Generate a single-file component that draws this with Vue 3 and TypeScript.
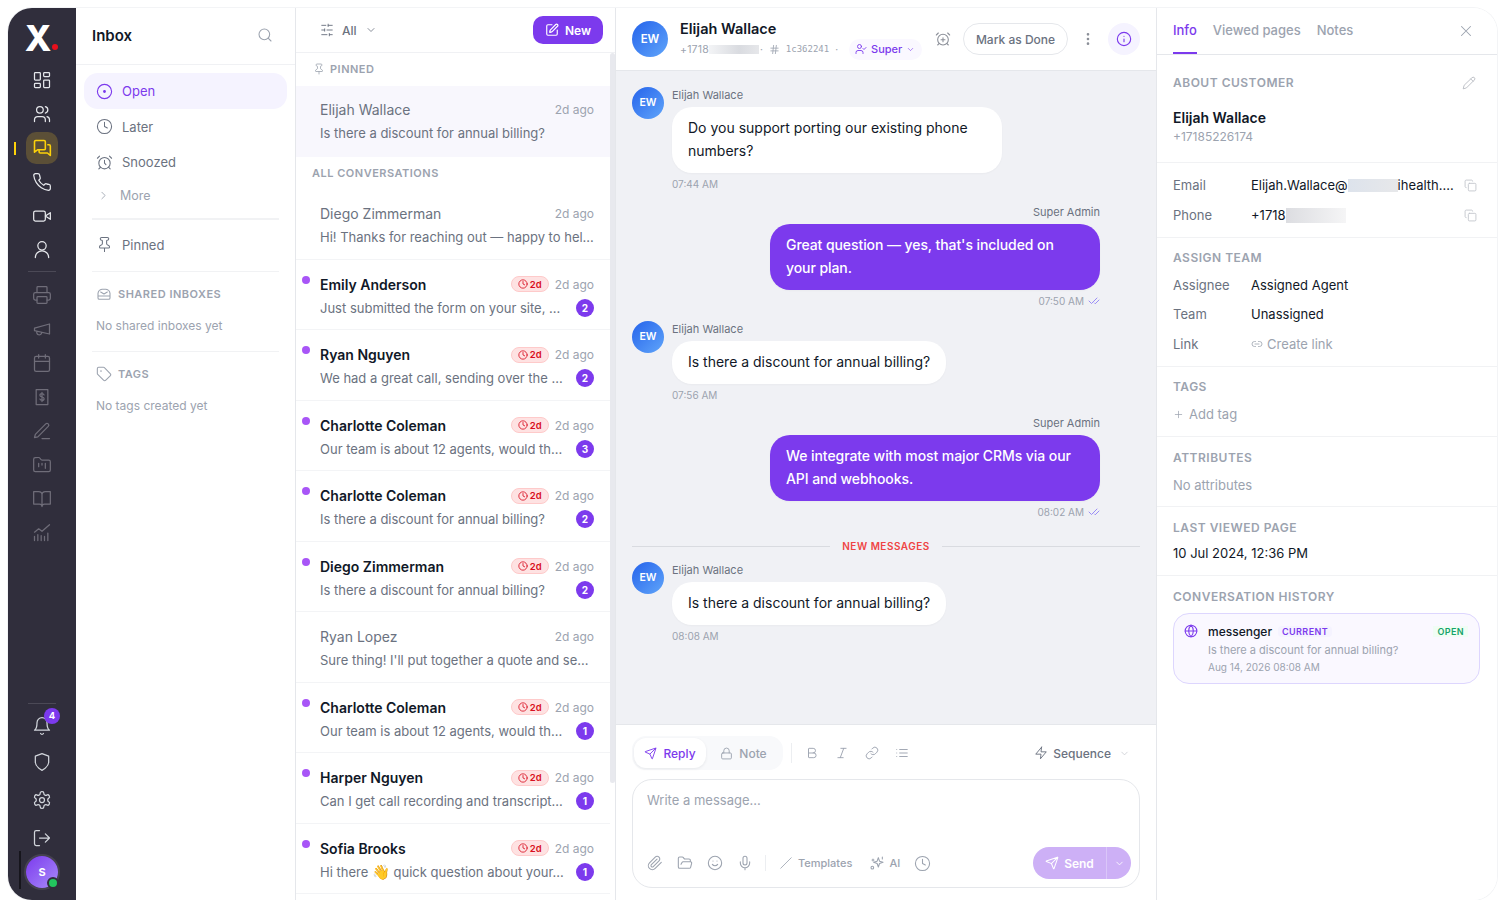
<script setup lang="ts">
import { h } from 'vue';
import type { FunctionalComponent } from 'vue';

const p = (d: string) => `<path d="${d}"/>`;
const c = (x: number, y: number, r: number) => `<circle cx="${x}" cy="${y}" r="${r}"/>`;
const icons: Record<string, string> = {
  dashboard: '<rect x="3" y="3" width="7" height="9" rx="1"/><rect x="14" y="3" width="7" height="5" rx="1"/><rect x="14" y="12" width="7" height="9" rx="1"/><rect x="3" y="16" width="7" height="5" rx="1"/>',
  users: p('M16 21v-2a4 4 0 0 0-4-4H7a4 4 0 0 0-4 4v2M21 21v-2a4 4 0 0 0-3-3.87M16 3.13a4 4 0 0 1 0 7.75') + c(9.5, 7, 4),
  chats: p('M3 4.5A1.5 1.5 0 0 1 4.5 3h10A1.5 1.5 0 0 1 16 4.5V13a1 1 0 0 1-1 1H7l-4 3zM19 8h1.5A1.5 1.5 0 0 1 22 9.5V21l-3.5-3H10a1.5 1.5 0 0 1-1.5-1.5V14'),
  phone: p('M22 16.92v3a2 2 0 0 1-2.18 2 19.79 19.79 0 0 1-8.63-3.07 19.5 19.5 0 0 1-6-6 19.79 19.79 0 0 1-3.07-8.67A2 2 0 0 1 4.11 2h3a2 2 0 0 1 2 1.72 12.84 12.84 0 0 0 .7 2.81 2 2 0 0 1-.45 2.11L8.09 9.91a16 16 0 0 0 6 6l1.27-1.27a2 2 0 0 1 2.11-.45 12.84 12.84 0 0 0 2.81.7A2 2 0 0 1 22 16.92z'),
  video: p('m22 8-6 4 6 4V8Z') + '<rect x="2" y="6" width="14" height="12" rx="2"/>',
  user: p('M4 21c0-4.4 3.6-8 8-8s8 3.6 8 8') + c(12, 7, 5),
  printer: p('M6 9V3a1 1 0 0 1 1-1h10a1 1 0 0 1 1 1v6M6 18H4a2 2 0 0 1-2-2v-5a2 2 0 0 1 2-2h16a2 2 0 0 1 2 2v5a2 2 0 0 1-2 2h-2') + '<rect x="6" y="14" width="12" height="8" rx="1"/>',
  megaphone: p('m3 11 18-5v12L3 14v-3zM11.6 16.8a3 3 0 1 1-5.8-1.6'),
  calendar: '<rect x="3" y="4" width="18" height="18" rx="2"/>' + p('M16 2v4M8 2v4M3 10h18'),
  receipt: p('M5 3h14v18H5zM14.5 9.5c-.5-1-1.5-1.5-2.5-1.5-1.4 0-2.5.7-2.5 2s1.1 1.8 2.5 2 2.5.7 2.5 2-1.1 2-2.5 2c-1 0-2-.5-2.5-1.5M12 6.5v11'),
  penline: p('M12 21h9M16.5 3.5a2.12 2.12 0 0 1 3 3L7 19l-4 1 1-4Z'),
  folderk: p('M4 20h16a2 2 0 0 0 2-2V8a2 2 0 0 0-2-2h-7.93a2 2 0 0 1-1.66-.9l-.82-1.2A2 2 0 0 0 7.93 3H4a2 2 0 0 0-2 2v13c0 1.1.9 2 2 2ZM8 10v4M12 10v2M16 10v6'),
  book: p('M2 3h6a4 4 0 0 1 4 4v14a3 3 0 0 0-3-3H2zM22 3h-6a4 4 0 0 0-4 4v14a3 3 0 0 1 3-3h7z'),
  chart: p('M3 21v-5M7 21v-7M11 21v-6M15 21v-5M19 21v-9M3 11l5-4 4 3 9-8'),
  bell: p('M6 8a6 6 0 0 1 12 0c0 7 3 9 3 9H3s3-2 3-9M10.3 21a1.94 1.94 0 0 0 3.4 0'),
  shield: p('M12 22s8-4 8-10V5l-8-3-8 3v7c0 6 8 10 8 10z'),
  gear: p('M12.22 2h-.44a2 2 0 0 0-2 2v.18a2 2 0 0 1-1 1.73l-.43.25a2 2 0 0 1-2 0l-.15-.08a2 2 0 0 0-2.73.73l-.22.38a2 2 0 0 0 .73 2.73l.15.1a2 2 0 0 1 1 1.72v.51a2 2 0 0 1-1 1.74l-.15.09a2 2 0 0 0-.73 2.73l.22.38a2 2 0 0 0 2.73.73l.15-.08a2 2 0 0 1 2 0l.43.25a2 2 0 0 1 1 1.73V20a2 2 0 0 0 2 2h.44a2 2 0 0 0 2-2v-.18a2 2 0 0 1 1-1.73l.43-.25a2 2 0 0 1 2 0l.15.08a2 2 0 0 0 2.73-.73l.22-.39a2 2 0 0 0-.73-2.73l-.15-.08a2 2 0 0 1-1-1.74v-.5a2 2 0 0 1 1-1.74l.15-.09a2 2 0 0 0 .73-2.73l-.22-.38a2 2 0 0 0-2.73-.73l-.15.08a2 2 0 0 1-2 0l-.43-.25a2 2 0 0 1-1-1.73V4a2 2 0 0 0-2-2z') + c(12, 12, 3),
  logout: p('M9 21H5a2 2 0 0 1-2-2V5a2 2 0 0 1 2-2h4M16 17l5-5-5-5M21 12H9'),
  search: c(11, 11, 8) + p('m21 21-4.3-4.3'),
  open: c(12, 12, 10) + '<circle cx="12" cy="12" r="1.2" fill="currentColor"/>',
  clock: c(12, 12, 10) + p('M12 6v6l4 2'),
  alarm: c(12, 13, 8) + p('M12 9v4l2 2M5 3 2 6M22 6l-3-3M6.38 18.7 4 21M17.64 18.67 20 21'),
  alarmplus: c(12, 13, 8) + p('M12 10v6M9 13h6M5 3 2 6M22 6l-3-3M6.38 18.7 4 21M17.64 18.67 20 21'),
  right: p('m9 18 6-6-6-6'),
  down: p('m6 9 6 6 6-6'),
  pin: p('M12 17v5M9 10.76a2 2 0 0 1-1.11 1.79l-1.78.9A2 2 0 0 0 5 15.24V16a1 1 0 0 0 1 1h12a1 1 0 0 0 1-1v-.76a2 2 0 0 0-1.11-1.79l-1.78-.9A2 2 0 0 1 15 10.76V7a1 1 0 0 1 1-1 2 2 0 0 0 0-4H8a2 2 0 0 0 0 4 1 1 0 0 1 1 1z'),
  inbox: p('M3 11a7 7 0 0 1 6-6h6a7 7 0 0 1 6 6v7a2 2 0 0 1-2 2H5a2 2 0 0 1-2-2zM3 15h18M7 9l5 3 5-3'),
  tag: p('M12.586 2.586A2 2 0 0 0 11.172 2H4a2 2 0 0 0-2 2v7.172a2 2 0 0 0 .586 1.414l8.704 8.704a2.426 2.426 0 0 0 3.42 0l6.58-6.58a2.426 2.426 0 0 0 0-3.42z') + c(7.5, 7.5, 0.5),
  sliders: p('M21 4h-7M10 4H3M21 12h-9M8 12H3M21 20h-5M12 20H3M14 2v4M8 10v4M16 18v4'),
  compose: p('M12 3H5a2 2 0 0 0-2 2v14a2 2 0 0 0 2 2h14a2 2 0 0 0 2-2v-7M18.375 2.625a1 1 0 0 1 3 3l-9.013 9.014a2 2 0 0 1-.853.505l-2.873.84a.5.5 0 0 1-.62-.62l.84-2.873a2 2 0 0 1 .506-.852z'),
  hash: p('M4 9h16M4 15h16M10 3 8 21M16 3l-2 18'),
  usercheck: p('M16 21v-2a4 4 0 0 0-4-4H6a4 4 0 0 0-4 4v2M16 11l2 2 4-4') + c(9, 7, 4),
  more: '<circle cx="12" cy="5" r="1"/><circle cx="12" cy="12" r="1"/><circle cx="12" cy="19" r="1"/>',
  info: c(12, 12, 10) + p('M12 16v-4M12 8h.01'),
  x: p('M18 6 6 18M6 6l12 12'),
  send: p('M14.536 21.686a.5.5 0 0 0 .937-.024l6.5-19a.496.496 0 0 0-.635-.635l-19 6.5a.5.5 0 0 0-.024.937l7.93 3.18a2 2 0 0 1 1.112 1.11zM21.854 2.147l-10.94 10.939'),
  lock: '<rect x="3" y="11" width="18" height="11" rx="2"/>' + p('M7 11V7a5 5 0 0 1 10 0v4'),
  bold: p('M6 12h9a4 4 0 0 1 0 8H7a1 1 0 0 1-1-1V5a1 1 0 0 1 1-1h7a4 4 0 0 1 0 8'),
  italic: p('M19 4h-9M14 20H5M15 4 9 20'),
  link: p('M10 13a5 5 0 0 0 7.54.54l3-3a5 5 0 0 0-7.07-7.07l-1.72 1.71M14 11a5 5 0 0 0-7.54-.54l-3 3a5 5 0 0 0 7.07 7.07l1.71-1.71'),
  list: p('M3 6h.01M8 6h13M3 12h.01M8 12h13M3 18h.01M8 18h13'),
  zap: p('M13 2 3 14h9l-1 8 10-12h-9l1-8z'),
  clip: p('m21.44 11.05-9.19 9.19a6 6 0 0 1-8.49-8.49l8.57-8.57A4 4 0 1 1 18 8.84l-8.59 8.57a2 2 0 0 1-2.83-2.83l8.49-8.48'),
  folder: p('m6 14 1.5-2.9A2 2 0 0 1 9.24 10H20a2 2 0 0 1 1.94 2.5l-1.54 6a2 2 0 0 1-1.95 1.5H4a2 2 0 0 1-2-2V5a2 2 0 0 1 2-2h3.9a2 2 0 0 1 1.69.9l.81 1.2a2 2 0 0 0 1.67.9H18a2 2 0 0 1 2 2v2'),
  smile: c(12, 12, 10) + p('M8 14s1.5 2 4 2 4-2 4-2M9 9h.01M15 9h.01'),
  mic: p('M12 2a3 3 0 0 0-3 3v7a3 3 0 0 0 6 0V5a3 3 0 0 0-3-3ZM19 10v2a7 7 0 0 1-14 0v-2M12 19v3'),
  slash: p('M3 21 21 3'),
  sparkles: p('M14 4l1.8 5.2L21 11l-5.2 1.8L14 18l-1.8-5.2L7 11l5.2-1.8zM20 3v3M6 6v3M4.5 7.5h3') + c(5, 19, 2),
  pencil: p('M17 3a2.85 2.83 0 1 1 4 4L7.5 20.5 2 22l1.5-5.5ZM15 5l4 4'),
  copy: '<rect x="8" y="8" width="14" height="14" rx="2"/>' + p('M4 16c-1.1 0-2-.9-2-2V4c0-1.1.9-2 2-2h10c1.1 0 2 .9 2 2'),
  link2: p('M9 17H7A5 5 0 0 1 7 7h2M15 7h2a5 5 0 1 1 0 10h-2M8 12h8'),
  plus: p('M5 12h14M12 5v14'),
  globe: c(12, 12, 10) + p('M12 2a14.5 14.5 0 0 0 0 20 14.5 14.5 0 0 0 0-20M2 12h20'),
  checks: p('M18 6 7 17l-5-5M22 10l-7.5 7.5L13 16'),
};

const Ico: FunctionalComponent<{ name: string; size?: number; sw?: number }> = (props) =>
  h('svg', {
    viewBox: '0 0 24 24',
    width: props.size ?? 16,
    height: props.size ?? 16,
    fill: 'none',
    stroke: 'currentColor',
    'stroke-width': props.sw ?? 2,
    'stroke-linecap': 'round',
    'stroke-linejoin': 'round',
    innerHTML: icons[props.name],
  });
Ico.props = ['name', 'size', 'sw'];

const railTop = ['dashboard', 'users', 'chats', 'phone', 'video', 'user'];
const railFaded = ['printer', 'megaphone', 'calendar', 'receipt', 'penline', 'folderk', 'book', 'chart'];

const conversations = [
  { name: 'Diego Zimmerman', text: 'Hi! Thanks for reaching out — happy to hel...', unread: 0 },
  { name: 'Emily Anderson', text: 'Just submitted the form on your site, ...', unread: 2 },
  { name: 'Ryan Nguyen', text: 'We had a great call, sending over the ...', unread: 2 },
  { name: 'Charlotte Coleman', text: 'Our team is about 12 agents, would th...', unread: 3 },
  { name: 'Charlotte Coleman', text: 'Is there a discount for annual billing?', unread: 2 },
  { name: 'Diego Zimmerman', text: 'Is there a discount for annual billing?', unread: 2 },
  { name: 'Ryan Lopez', text: "Sure thing! I'll put together a quote and se...", unread: 0 },
  { name: 'Charlotte Coleman', text: 'Our team is about 12 agents, would th...', unread: 1 },
  { name: 'Harper Nguyen', text: 'Can I get call recording and transcript...', unread: 1 },
  { name: 'Sofia Brooks', lead: 'Hi there ', text: ' quick question about your...', unread: 1 },
];

const messages = [
  { mine: false, text: 'Do you support porting our existing phone numbers?', time: '07:44 AM', wide: true },
  { mine: true, text: "Great question — yes, that's included on your plan.", time: '07:50 AM', wide: true },
  { mine: false, text: 'Is there a discount for annual billing?', time: '07:56 AM', wide: false },
  { mine: true, text: 'We integrate with most major CRMs via our API and webhooks.', time: '08:02 AM', wide: true },
];
</script>

<template>
  <div class="frame">
    <nav class="rail">
      <div class="logo">X<i></i></div>
      <div class="rail-group">
        <a v-for="n in railTop" :key="n" class="rail-btn" :class="{ active: n === 'chats' }">
          <Ico :name="n" :size="20" :sw="n === 'chats' ? 1.9 : 1.5" />
        </a>
      </div>
      <div class="rail-line"></div>
      <div class="rail-group faded">
        <a v-for="n in railFaded" :key="n" class="rail-btn"><Ico :name="n" :size="20" :sw="1.5" /></a>
      </div>
      <div class="rail-bottom">
        <div class="rail-line2"></div>
        <a class="rail-b bell"><Ico name="bell" :size="20" :sw="1.5" /><b class="bell-badge">4</b></a>
        <a class="rail-b"><Ico name="shield" :size="20" :sw="1.5" /></a>
        <a class="rail-b"><Ico name="gear" :size="20" :sw="1.5" /></a>
        <a class="rail-b"><Ico name="logout" :size="20" :sw="1.5" /></a>
        <div class="me">S<i></i></div>
      </div>
    </nav>

    <aside class="inbox">
      <header class="inbox-head">
        <h1>Inbox</h1>
        <Ico name="search" :size="16" :sw="1.6" class="muted" />
      </header>
      <div class="inbox-nav">
        <div class="nav-item on"><Ico name="open" :size="17" :sw="1.6" />Open</div>
        <div class="nav-item"><Ico name="clock" :size="17" :sw="1.5" />Later</div>
        <div class="nav-item"><Ico name="alarm" :size="17" :sw="1.5" />Snoozed</div>
        <div class="nav-more"><Ico name="right" :size="13" :sw="1.6" />More</div>
        <div class="hr thick"></div>
        <div class="nav-item pinned"><Ico name="pin" :size="17" :sw="1.5" />Pinned</div>
        <div class="hr"></div>
        <div class="side-title"><Ico name="inbox" :size="16" :sw="1.6" />SHARED INBOXES</div>
        <div class="side-empty">No shared inboxes yet</div>
        <div class="hr"></div>
        <div class="side-title"><Ico name="tag" :size="16" :sw="1.6" />TAGS</div>
        <div class="side-empty">No tags created yet</div>
      </div>
    </aside>

    <section class="list">
      <header class="list-head">
        <div class="filter"><Ico name="sliders" :size="14" :sw="1.6" /><span>All</span><Ico name="down" :size="12" :sw="1.6" /></div>
        <button class="new"><Ico name="compose" :size="14" :sw="2" />New</button>
      </header>
      <div class="list-body">
        <div class="sec-pin"><Ico name="pin" :size="12" :sw="1.6" />PINNED</div>
        <div class="pin-row">
          <div class="line1"><span class="who read">Elijah Wallace</span><span class="ago">2d ago</span></div>
          <div class="line2"><span class="snip">Is there a discount for annual billing?</span></div>
        </div>
        <div class="sec-all">ALL CONVERSATIONS</div>
        <div v-for="(row, i) in conversations" :key="i" class="row">
          <i v-if="row.unread" class="dot"></i>
          <div class="line1">
            <span class="who" :class="{ read: !row.unread }">{{ row.name }}</span>
            <span v-if="row.unread" class="sla"><Ico name="clock" :size="10" :sw="2" />2d</span>
            <span class="ago">2d ago</span>
          </div>
          <div class="line2">
            <span class="snip"><template v-if="row.lead">{{ row.lead }}<span class="wave">👋</span></template>{{ row.text }}</span>
            <b v-if="row.unread" class="count">{{ row.unread }}</b>
          </div>
        </div>
        <div class="thumb"></div>
      </div>
    </section>

    <main class="chat">
      <header class="chat-head">
        <div class="av big">EW</div>
        <div class="who-box">
          <div class="chat-name">Elijah Wallace</div>
          <div class="chat-sub">
            <span class="num">+1718</span><span class="blur b1"></span><span class="sep s1">·</span>
            <Ico name="hash" :size="11" :sw="1.8" />
            <span class="mono">1c362241</span><span class="sep">·</span>
            <span class="super"><Ico name="usercheck" :size="12" :sw="1.8" />Super<Ico name="down" :size="9" :sw="1.6" /></span>
          </div>
        </div>
        <div class="head-actions">
          <Ico name="alarmplus" :size="16" :sw="1.6" class="muted2" />
          <button class="done">Mark as Done</button>
          <Ico name="more" :size="16" :sw="2" class="muted2" />
          <span class="info-btn"><Ico name="info" :size="16" :sw="1.7" /></span>
        </div>
      </header>

      <div class="thread">
        <template v-for="(m, i) in messages" :key="i">
          <div v-if="!m.mine" class="msg">
            <div class="av">EW</div>
            <div class="msg-col">
              <div class="msg-name">Elijah Wallace</div>
              <div class="bubble" :class="{ wide: m.wide }">{{ m.text }}</div>
              <div class="msg-time">{{ m.time }}</div>
            </div>
          </div>
          <div v-else class="msg mine">
            <div class="msg-name">Super Admin</div>
            <div class="bubble wide">{{ m.text }}</div>
            <div class="msg-time">{{ m.time }}<Ico name="checks" :size="12" :sw="1.7" class="tick" /></div>
          </div>
        </template>
        <div class="new-line"><span>NEW MESSAGES</span></div>
        <div class="msg">
          <div class="av">EW</div>
          <div class="msg-col">
            <div class="msg-name">Elijah Wallace</div>
            <div class="bubble">Is there a discount for annual billing?</div>
            <div class="msg-time">08:08 AM</div>
          </div>
        </div>
      </div>

      <footer class="composer">
        <div class="tools">
          <div class="seg">
            <span class="seg-on"><Ico name="send" :size="13" :sw="1.7" />Reply</span>
            <span class="seg-off"><Ico name="lock" :size="13" :sw="1.7" />Note</span>
          </div>
          <i class="vr"></i>
          <div class="fmt">
            <Ico name="bold" :size="14" :sw="1.6" />
            <Ico name="italic" :size="14" :sw="1.6" />
            <Ico name="link" :size="14" :sw="1.6" />
            <Ico name="list" :size="14" :sw="1.6" />
          </div>
          <div class="seq"><Ico name="zap" :size="14" :sw="1.6" />Sequence<Ico name="down" :size="11" :sw="1.6" class="seq-c" /></div>
        </div>
        <div class="box">
          <div class="ph">Write a message...</div>
          <div class="box-foot">
            <div class="box-tools">
              <Ico name="clip" :size="16" :sw="1.6" />
              <Ico name="folder" :size="16" :sw="1.6" />
              <Ico name="smile" :size="16" :sw="1.6" />
              <Ico name="mic" :size="16" :sw="1.6" />
              <i class="vr small"></i>
              <span class="tpl"><Ico name="slash" :size="14" :sw="1.4" />Templates</span>
              <span class="tpl ai"><Ico name="sparkles" :size="16" :sw="1.6" />AI</span>
              <Ico name="clock" :size="17" :sw="1.5" />
            </div>
            <div class="send">
              <span class="send-main"><Ico name="send" :size="14" :sw="1.8" />Send</span>
              <span class="send-more"><Ico name="down" :size="11" :sw="1.8" /></span>
            </div>
          </div>
        </div>
      </footer>
    </main>

    <aside class="info">
      <header class="tabs">
        <span class="tab on">Info</span>
        <span class="tab">Viewed pages</span>
        <span class="tab">Notes</span>
        <Ico name="x" :size="18" :sw="1.4" class="close" />
      </header>
      <section class="sect about">
        <div class="title-row"><h2>ABOUT CUSTOMER</h2><Ico name="pencil" :size="14" :sw="1.4" class="lighter" /></div>
        <div class="cust">Elijah Wallace</div>
        <div class="cust-phone">+17185226174</div>
      </section>
      <section class="sect contact">
        <div class="kv"><span class="k">Email</span><span class="v email">Elijah.Wallace@<i class="blur b2"></i>ihealth....</span><Ico name="copy" :size="13" :sw="1.6" class="copy" /></div>
        <div class="kv"><span class="k">Phone</span><span class="v">+1718<i class="blur b3"></i></span><Ico name="copy" :size="13" :sw="1.6" class="copy" /></div>
      </section>
      <section class="sect team">
        <h2>ASSIGN TEAM</h2>
        <div class="kv"><span class="k">Assignee</span><span class="v">Assigned Agent</span></div>
        <div class="kv"><span class="k">Team</span><span class="v">Unassigned</span></div>
        <div class="kv"><span class="k">Link</span><span class="v faint"><Ico name="link2" :size="12" :sw="1.6" />Create link</span></div>
      </section>
      <section class="sect block b-tags">
        <h2>TAGS</h2>
        <div class="plain faint"><Ico name="plus" :size="11" :sw="1.6" />Add tag</div>
      </section>
      <section class="sect block">
        <h2>ATTRIBUTES</h2>
        <div class="plain faint">No attributes</div>
      </section>
      <section class="sect block b-last">
        <h2>LAST VIEWED PAGE</h2>
        <div class="plain dark">10 Jul 2024, 12:36 PM</div>
      </section>
      <section class="sect history">
        <h2>CONVERSATION HISTORY</h2>
        <div class="card">
          <Ico name="globe" :size="14" :sw="1.8" class="globe" />
          <div class="card-main">
            <div class="card-top"><span class="src">messenger</span><span class="cur">CURRENT</span><span class="open">OPEN</span></div>
            <div class="card-text">Is there a discount for annual billing?</div>
            <div class="card-date">Aug 14, 2026 08:08 AM</div>
          </div>
        </div>
      </section>
    </aside>
  </div>
</template>

<style scoped>
.frame {
  position: relative;
  box-sizing: border-box;
  width: 1489px;
  height: 892px;
  margin: 8px 0 0 8px;
  display: flex;
  border-radius: 24px;
  overflow: hidden;
  background: #fff;
  box-shadow: 0 0 0 1px #f3f4f6;
  font-family: Inter, "Noto Sans", sans-serif;
  color: #111827;
}

/* rail */
.rail {
  width: 68px;
  flex: none;
  background: #302e3c;
  display: flex;
  flex-direction: column;
  align-items: center;
  color: #e5e7eb;
}
.logo {
  position: relative;
  height: 56px;
  width: 100%;
  text-align: center;
  padding-right: 8px;
  box-sizing: border-box;
  font-size: 35px;
  font-weight: 800;
  line-height: 60px;
  color: #fff;
}
.logo i {
  position: absolute;
  left: 44px;
  top: 36px;
  width: 6px;
  height: 6px;
  border-radius: 50%;
  background: #e8101c;
}
.rail-group { display: flex; flex-direction: column; gap: 2px; }
.rail-btn {
  position: relative;
  width: 32px;
  height: 32px;
  display: flex;
  align-items: center;
  justify-content: center;
  border-radius: 10px;
}
.rail-btn.active { background: #5b4f37; color: #fdd20a; }
.rail-btn.active::before {
  content: "";
  position: absolute;
  left: -12px;
  top: 10px;
  width: 2px;
  height: 13px;
  background: #fdd20a;
}
.rail-line { width: 28px; height: 1px; background: #4b4956; margin: 5px 0 7px; }
.faded { color: #6f6d79; }
.rail-bottom {
  margin-top: auto;
  display: flex;
  flex-direction: column;
  align-items: center;
  width: 100%;
  padding-bottom: 12px;
}
.rail-line2 { width: 28px; height: 1px; background: #4b4956; margin-bottom: 3px; }
.rail-b {
  position: relative;
  height: 38px;
  width: 32px;
  display: flex;
  align-items: center;
  justify-content: center;
  color: #d1d5db;
}
.rail-b.bell { margin-bottom: -2px; }
.bell-badge {
  position: absolute;
  left: 18px;
  top: 1px;
  width: 16px;
  height: 16px;
  border-radius: 50%;
  background: #7c3aed;
  color: #fff;
  font-size: 9.5px;
  line-height: 16px;
  text-align: center;
}
.me {
  position: relative;
  width: 32px;
  height: 32px;
  margin-top: -1px;
  border-radius: 50%;
  background: linear-gradient(135deg, #7c3aed, #a78bfa);
  box-shadow: 0 0 0 2px #45424f;
  color: #fff;
  font-size: 11px;
  font-weight: 700;
  line-height: 32px;
  text-align: center;
}
.me::before {
  content: "";
  position: absolute;
  left: -7px;
  top: -5px;
  width: 2px;
  height: 38px;
  background: #16151c;
}
.me i {
  position: absolute;
  right: -1px;
  bottom: -1px;
  width: 8px;
  height: 8px;
  border-radius: 50%;
  background: #22c55e;
  border: 2px solid #302e3c;
}

/* inbox */
.inbox {
  width: 220px;
  flex: none;
  box-sizing: border-box;
  border-right: 1px solid #e5e7eb;
}
.inbox-head {
  height: 57px;
  box-sizing: border-box;
  border-bottom: 1px solid #f0f1f4;
  padding: 0 22px 2px 16px;
  display: flex;
  align-items: center;
  justify-content: space-between;
}
.inbox-head h1 { margin: 0; font-size: 15px; font-weight: 600; color: #111827; }
.muted { color: #9ca3af; }
.inbox-nav { padding: 8px 8px 0; }
.nav-item {
  height: 35.5px;
  display: flex;
  align-items: center;
  gap: 9px;
  padding-left: 12px;
  font-size: 13px;
  color: #6b7280;
  border-radius: 14px;
}
.nav-item.on { height: 36px; background: #f5f3ff; color: #7c3aed; }
.nav-item svg { flex: none; }
.nav-more {
  height: 30px;
  display: flex;
  align-items: center;
  gap: 10px;
  padding-left: 13px;
  font-size: 12.5px;
  color: #9ca3af;
}
.hr { height: 1px; background: #f1f2f4; margin: 8px 0 0 8px; width: 187px; }
.hr.thick { height: 2px; }
.nav-item.pinned { margin-top: 7px; }
.side-title {
  height: 44px;
  display: flex;
  align-items: center;
  gap: 6px;
  padding-left: 12px;
  font-size: 11px;
  font-weight: 600;
  letter-spacing: 0.5px;
  color: #9ca3af;
}
.side-empty {
  padding-left: 12px;
  font-size: 12px;
  line-height: 20px;
  margin-bottom: 15px;
  color: #9ca3af;
}

/* list */
.list {
  width: 320px;
  flex: none;
  box-sizing: border-box;
  border-right: 1px solid #e5e7eb;
  display: flex;
  flex-direction: column;
  min-height: 0;
}
.list-head {
  height: 45px;
  flex: none;
  box-sizing: border-box;
  border-bottom: 1px solid #f0f1f4;
  padding: 0 12px 0 24px;
  display: flex;
  align-items: center;
  justify-content: space-between;
}
.filter { display: flex; align-items: center; gap: 8px; font-size: 12px; font-weight: 500; color: #6b7280; }
.new {
  height: 28px;
  width: 70px;
  border: 0;
  border-radius: 10px;
  background: #7c3aed;
  color: #fff;
  display: flex;
  align-items: center;
  justify-content: center;
  gap: 6px;
  font: 600 12px Inter, sans-serif;
}
.list-body { position: relative; flex: 1; overflow: hidden; padding-right: 5px; }
.thumb {
  position: absolute;
  top: 0;
  right: 0;
  width: 5px;
  height: 730px;
  background: #e8e9ee;
  border-radius: 3px;
}
.sec-pin {
  height: 33px;
  box-sizing: border-box;
  padding: 0 0 2px 17px;
  display: flex;
  align-items: center;
  gap: 5px;
  font-size: 11px;
  font-weight: 600;
  letter-spacing: 0.5px;
  color: #9ca3af;
}
.pin-row {
  height: 71px;
  box-sizing: border-box;
  padding: 12.5px 16px 0 24px;
  background: #f8f7fd;
}
.sec-all {
  height: 32px;
  line-height: 33px;
  padding-left: 16px;
  font-size: 11px;
  font-weight: 600;
  letter-spacing: 0.5px;
  color: #9ca3af;
}
.row {
  position: relative;
  height: 70.5px;
  box-sizing: border-box;
  padding: 13.6px 16px 0 24px;
  border-bottom: 1px solid #f3f4f6;
}
.dot {
  position: absolute;
  left: 6px;
  top: 16px;
  width: 8px;
  height: 8px;
  border-radius: 50%;
  background: #a855f7;
}
.line1 { display: flex; align-items: center; height: 22px; }
.line2 { display: flex; align-items: center; justify-content: space-between; height: 22px; margin-top: 1.5px; }
.who { font-size: 14px; font-weight: 600; color: #111827; margin-right: auto; }
.who.read { font-weight: 400; color: #6b7280; }
.ago { font-size: 12px; color: #9ca3af; margin-left: 6px; }
.snip { font-size: 13px; color: #6b7280; white-space: nowrap; }
.wave { font-size: 14.5px; line-height: 1; }
.sla {
  width: 38px;
  height: 16px;
  box-sizing: border-box;
  display: flex;
  align-items: center;
  justify-content: center;
  gap: 2px;
  border: 1px solid #fecaca;
  border-radius: 8px;
  background: #fee2e2;
  color: #d90f21;
  font-size: 9.5px;
  font-weight: 600;
}
.count {
  width: 18px;
  height: 18px;
  border-radius: 50%;
  background: #7c3aed;
  color: #fff;
  font-size: 10px;
  line-height: 18px;
  text-align: center;
  flex: none;
}

/* chat */
.chat {
  width: 540px;
  flex: none;
  display: flex;
  flex-direction: column;
  background: #f0f1f5;
}
.chat-head {
  height: 63px;
  flex: none;
  box-sizing: border-box;
  border-bottom: 1px solid #e5e7eb;
  background: #fff;
  padding: 0 16px;
  display: flex;
  align-items: center;
  gap: 12px;
}
.av {
  width: 32px;
  height: 32px;
  flex: none;
  border-radius: 50%;
  background: linear-gradient(135deg, #2563eb, #60a5fa);
  color: #fff;
  font-size: 10.5px;
  font-weight: 600;
  line-height: 32px;
  text-align: center;
}
.av.big { width: 36px; height: 36px; line-height: 36px; font-size: 11.5px; }
.chat-name { font-size: 14.5px; font-weight: 600; line-height: 22px; }
.chat-sub {
  display: flex;
  align-items: center;
  gap: 4px;
  height: 22px;
  margin-top: -2px;
  font-size: 10px;
  color: #9ca3af;
}
.num { font-size: 10.5px; letter-spacing: 0.2px; }
.blur { display: inline-block; background: linear-gradient(90deg, #f3f4f6, #d9dbe0 60%, #e6e7ea); }
.b1 { width: 50px; height: 9px; margin-left: -4px; }
.mono { font-family: "DejaVu Sans Mono", "Liberation Mono", monospace; font-size: 9px; margin-left: 2px; }
.sep { margin: 0 2px; }
.sep.s1 { margin-left: -3px; }
.super {
  display: flex;
  align-items: center;
  gap: 4px;
  height: 21px;
  padding: 0 7px 0 6px;
  margin-left: 5px;
  border-radius: 11px;
  background: #faf8ff;
  color: #7c3aed;
  font-size: 11px;
  font-weight: 500;
}
.head-actions { margin-left: auto; display: flex; align-items: center; gap: 12px; }
.muted2 { color: #8b8f98; }
.done {
  width: 105px;
  height: 32px;
  border: 1px solid #e5e7eb;
  border-radius: 16px;
  background: #fff;
  color: #6b7280;
  font: 500 12px Inter, sans-serif;
}
.info-btn {
  width: 32px;
  height: 32px;
  border-radius: 50%;
  background: #f5f3ff;
  color: #7c3aed;
  display: flex;
  align-items: center;
  justify-content: center;
}
.thread { flex: 1; min-height: 0; overflow: hidden; padding: 16px 16px 0; }
.msg { display: flex; gap: 8px; margin-bottom: 12px; }
.msg.mine { flex-direction: column; align-items: flex-end; gap: 0; padding-right: 40px; }
.msg-name { font-size: 11px; line-height: 16px; color: #6b7280; margin-bottom: 4px; }
.bubble {
  display: inline-block;
  box-sizing: border-box;
  padding: 8.5px 16px 11.5px;
  border-radius: 20px;
  background: #fff;
  font-size: 14px;
  line-height: 23px;
  color: #111827;
  box-shadow: 0 1px 2px rgba(17, 24, 39, 0.03);
}
.bubble.wide { width: 330px; }
.mine .bubble { background: #7c3aed; color: #fff; font-weight: 500; letter-spacing: -0.08px; }
.msg-col { min-width: 0; }
.msg-time { font-size: 10px; line-height: 16px; margin-top: 3px; color: #9ca3af; display: flex; align-items: center; }
.tick { margin-left: 4px; color: #8b7cf6; }
.new-line {
  display: flex;
  align-items: center;
  gap: 12px;
  height: 16px;
  margin: 18px 0 0;
  font-size: 10px;
  font-weight: 600;
  letter-spacing: 0.5px;
  color: #ef4444;
}
.new-line::before, .new-line::after { content: ""; flex: 1; height: 1px; background: #d9dbe0; }
.new-line + .msg { margin-top: 8px; }
.composer {
  height: 176px;
  flex: none;
  box-sizing: border-box;
  border-top: 1px solid #e5e7eb;
  background: #fff;
  padding: 13px 16px 0;
}
.tools { display: flex; align-items: center; height: 30px; }
.seg {
  display: flex;
  align-items: center;
  height: 34px;
  padding: 2px;
  box-sizing: border-box;
  border-radius: 14px;
  background: #f8f9fb;
}
.seg-on, .seg-off { display: flex; align-items: center; gap: 6px; height: 30px; font-size: 12px; font-weight: 500; }
.seg-on {
  width: 72px;
  justify-content: center;
  border-radius: 12px;
  background: #fff;
  color: #7c3aed;
  box-shadow: 0 1px 3px rgba(17, 24, 39, 0.08);
}
.seg-off { width: 75px; justify-content: center; color: #9ca3af; }
.vr { width: 1px; height: 20px; background: #eceef1; margin: 0 13px 0 8px; }
.fmt { display: flex; gap: 16px; color: #9ca3af; }
.seq { margin-left: auto; display: flex; align-items: center; gap: 5px; padding-right: 10px; font-size: 12px; font-weight: 500; color: #6b7280; }
.seq-c { margin-left: 3px; color: #c4c7cd; }
.box {
  height: 109px;
  box-sizing: border-box;
  margin-top: 11px;
  padding: 11px 8px 8px 14px;
  border: 1px solid #e5e7eb;
  border-radius: 20px;
  display: flex;
  flex-direction: column;
  justify-content: space-between;
}
.ph { font-size: 13px; line-height: 18px; color: #9ca3af; }
.box-foot { display: flex; align-items: center; justify-content: space-between; }
.box-tools { display: flex; align-items: center; gap: 14px; color: #9ca3af; }
.vr.small { height: 16px; margin: 0 -1px 0 -2px; }
.tpl { display: flex; align-items: center; gap: 5px; font-size: 11px; font-weight: 500; color: #9ca3af; }
.tpl.ai { gap: 4px; margin-left: 3px; }
.send { display: flex; height: 32px; border-radius: 16px; overflow: hidden; background: #cdb0f6; color: #fff; }
.send-main { width: 73px; display: flex; align-items: center; justify-content: center; gap: 5px; font-size: 12px; font-weight: 600; }
.send-more { width: 24px; display: flex; align-items: center; justify-content: center; border-left: 1px solid #dac6f9; }

/* info */
.info { flex: 1; min-width: 0; border-left: 1px solid #e5e7eb; background: #fff; }
.tabs {
  position: relative;
  height: 47px;
  box-sizing: border-box;
  border-bottom: 1px solid #e5e7eb;
  padding-left: 16px;
  display: flex;
  gap: 16px;
}
.tab { height: 46px; box-sizing: border-box; padding-top: 14px; font-size: 13px; font-weight: 500; color: #9ca3af; }
.tab.on { color: #7c3aed; border-bottom: 2px solid #7c3aed; }
.close { position: absolute; right: 22px; top: 14px; color: #9ca3af; }
.sect { border-bottom: 1px solid #f1f2f4; padding: 0 16px; }
.sect h2 { margin: 0; font-size: 12px; font-weight: 600; line-height: 16px; letter-spacing: 0.5px; color: #9ca3af; }
.about { height: 108px; box-sizing: border-box; padding-top: 20px; }
.title-row { display: flex; align-items: center; justify-content: space-between; padding-right: 5px; }
.lighter { color: #b0b4bb; }
.cust { margin-top: 17px; font-size: 14px; font-weight: 600; line-height: 20px; }
.cust-phone { font-size: 12px; line-height: 16px; margin-top: 1px; color: #9ca3af; }
.contact { height: 75px; box-sizing: border-box; padding-top: 7px; }
.kv { display: flex; align-items: center; height: 30px; font-size: 13px; }
.k { width: 78px; color: #6b7280; flex: none; }
.v { display: flex; align-items: center; gap: 4px; color: #111827; white-space: nowrap; }
.email { gap: 0; }
.b2 { width: 50px; height: 13px; background: linear-gradient(90deg, #dde3ec, #e7e8ea); }
.b3 { width: 60px; height: 15px; margin-left: -4px; background: linear-gradient(90deg, #dcdde1, #f5f5f6); }
.copy { margin-left: auto; margin-right: 4px; color: #c0c4cb; }
.faint { color: #9ca3af; }
.team { height: 129px; box-sizing: border-box; padding-top: 12px; }
.team h2 { margin-bottom: 4px; }
.team .kv { height: 29.5px; }
.block { height: 70px; box-sizing: border-box; padding-top: 13px; }
.b-tags { padding-top: 12px; }
.b-last { height: 69px; }
.b-last .plain { margin-top: 7px; }
.plain { display: flex; align-items: center; gap: 5px; font-size: 13px; line-height: 20px; margin-top: 9px; }
.dark { color: #111827; }
.history { border-bottom: 0; padding-top: 13px; }
.card {
  display: flex;
  gap: 10px;
  box-sizing: border-box;
  width: 307px;
  height: 71px;
  margin-top: 8px;
  padding: 10px 11px 0 10px;
  border: 1px solid #ddd6fe;
  border-radius: 16px;
  background: #faf8ff;
}
.globe { color: #7c3aed; flex: none; }
.card-main { flex: 1; }
.card-top { display: flex; align-items: center; height: 14px; }
.src { font-size: 12px; font-weight: 500; }
.cur { margin-left: 6px; padding: 0 4px; border-radius: 4px; background: #f5f3ff; color: #7c3aed; font-size: 9px; font-weight: 600; letter-spacing: 0.4px; }
.open { margin-left: auto; padding: 0 4px; background: #f0fdf4; color: #16a36a; font-size: 9px; font-weight: 600; letter-spacing: 0.4px; }
.card-text { margin-top: 5px; font-size: 11px; line-height: 14px; color: #9ca3af; }
.card-date { margin-top: 3px; font-size: 10px; line-height: 14px; color: #9ca3af; }
</style>

<style>
html, body { background: #fff; overflow: hidden; }
</style>
